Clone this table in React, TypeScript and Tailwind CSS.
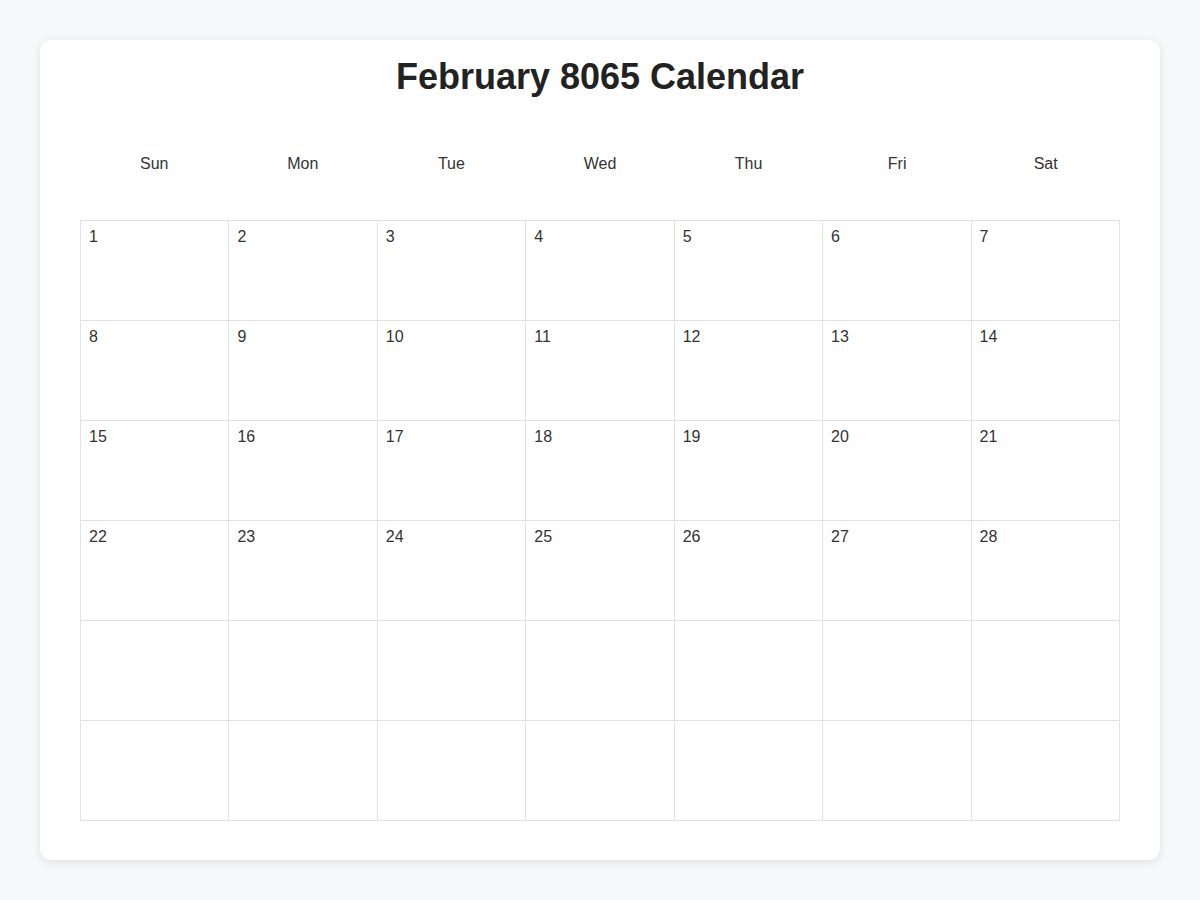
import React from "react";

const days = ["Sun", "Mon", "Tue", "Wed", "Thu", "Fri", "Sat"];

export default function App() {
  const cells: (number | null)[] = [];
  for (let i = 1; i <= 28; i++) cells.push(i);
  while (cells.length < 42) cells.push(null);
  const rows: (number | null)[][] = [];
  for (let r = 0; r < 6; r++) rows.push(cells.slice(r * 7, r * 7 + 7));

  return (
    <div
      className="min-h-[900px] w-full bg-[#f7f8fa] px-[40px] pt-[40px]"
      style={{ fontFamily: '"Liberation Sans", Arial, sans-serif' }}
    >
      <div className="h-[820px] w-[1120px] rounded-[12px] bg-white px-[40px] pt-[16px] shadow-[0_2px_10px_rgba(0,0,0,0.1)]">
        <h1 className="text-center text-[36px] font-bold leading-[42px] text-[#222]">
          February 8065 Calendar
        </h1>
        <div className="mt-[41px] grid grid-cols-7">
          {days.map((d) => (
            <div key={d} className="flex h-[50px] items-center justify-center text-[16px] text-[#333]">
              {d}
            </div>
          ))}
        </div>
        <table className="mt-[31px] w-[1040px] table-fixed border-collapse">
          <tbody>
            {rows.map((row, ri) => (
              <tr key={ri}>
                {row.map((c, ci) => (
                  <td
                    key={ci}
                    className="h-[100px] border border-[#e2e2e2] px-[8px] pt-[6px] align-top text-[16px] leading-[20px] text-[#333]"
                  >
                    {c ?? ""}
                  </td>
                ))}
              </tr>
            ))}
          </tbody>
        </table>
      </div>
    </div>
  );
}
